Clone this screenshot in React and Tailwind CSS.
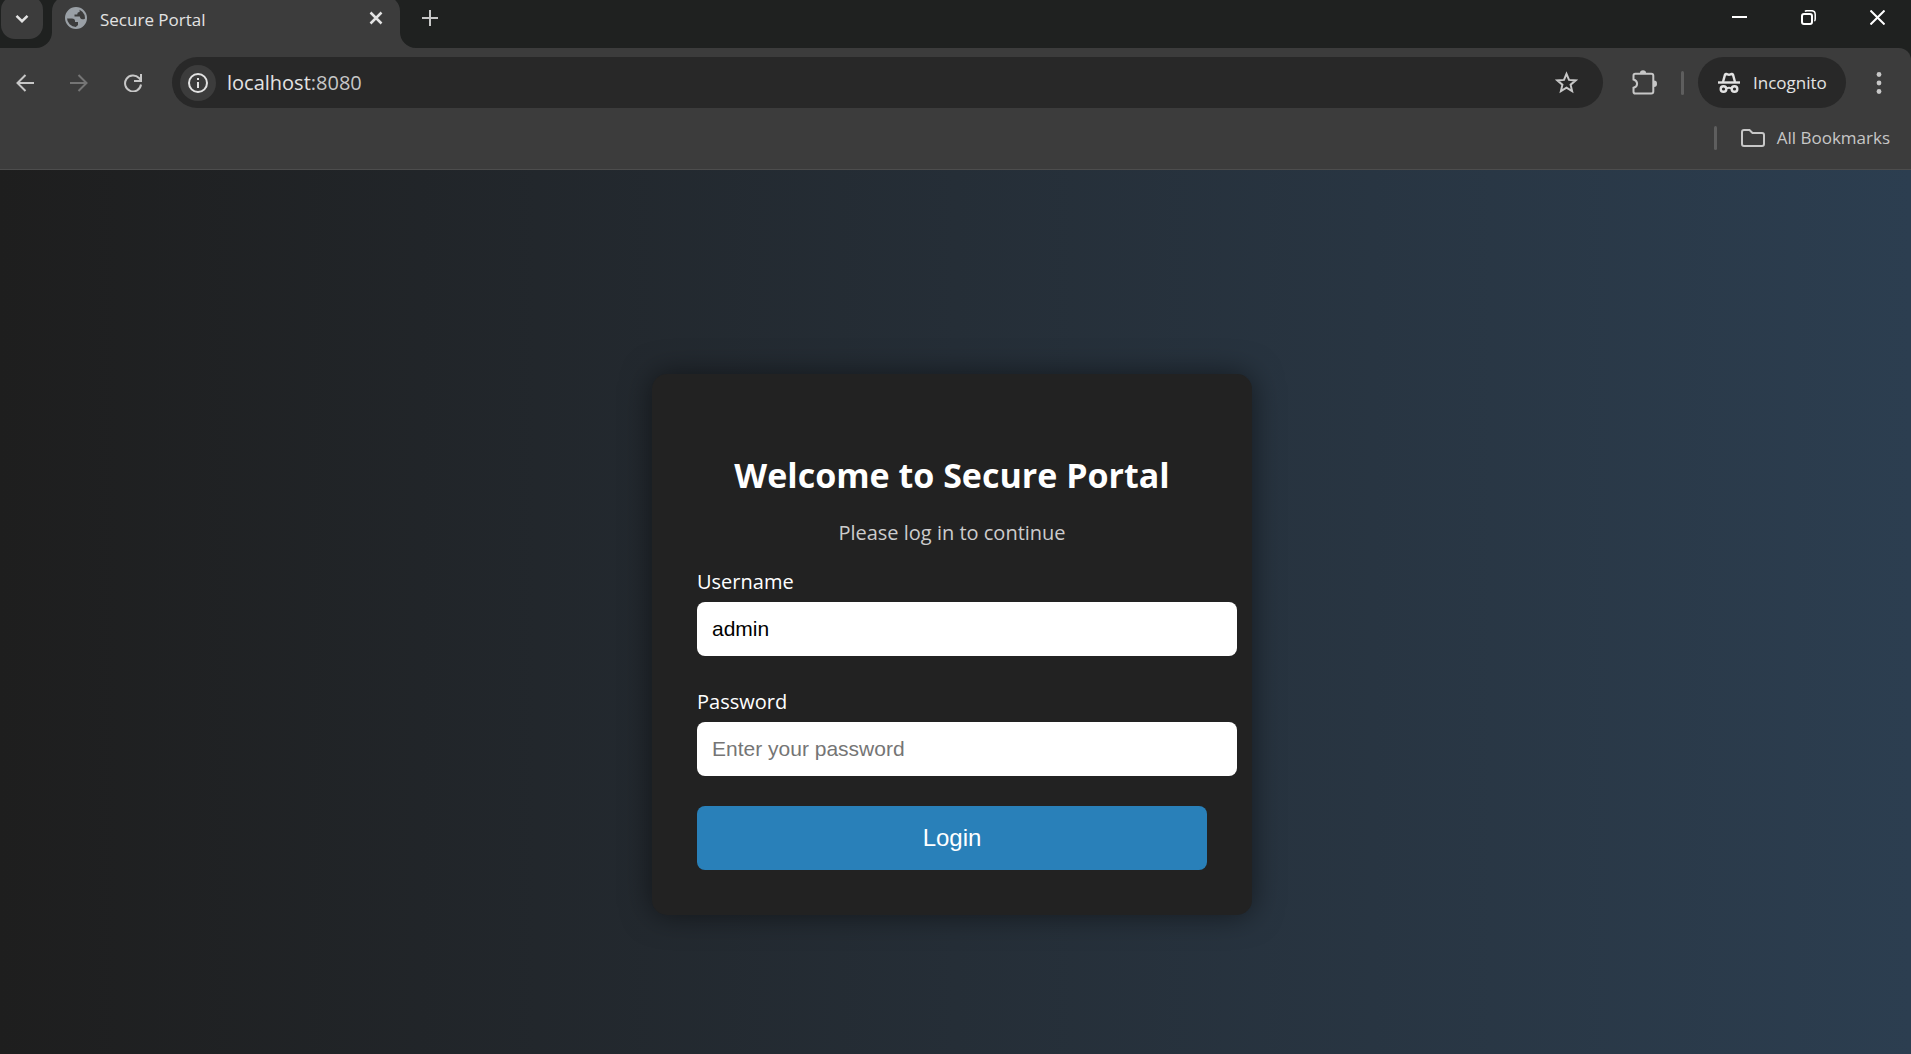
const UI = "font-['Open_Sans','Noto_Sans',sans-serif]";

function Icon({ className = '', children, box = '0 0 24 24', width = 2 }) {
  return (
    <svg viewBox={box} className={className} fill="none" stroke="currentColor" strokeWidth={width} aria-hidden="true">
      {children}
    </svg>
  );
}

function Flare({ className, d }) {
  return (
    <svg viewBox="0 0 16 16" className={`absolute bottom-0 size-4 ${className}`} fill="#3c3c3c" aria-hidden="true">
      <path d={d} />
    </svg>
  );
}

function TabStrip() {
  return (
    <div className="flex h-12 items-start overflow-hidden bg-[#1f2120]">
      <button type="button" aria-label="Search tabs" className="-mt-1 ml-px flex h-[43px] w-[42px] items-center justify-center rounded-[14px] bg-[#3c3c3c] text-[#e3e3e3]">
        <Icon className="size-3.5" box="0 0 14 14" width={2.5}>
          <path d="M1.500 4.800 7 10.200l5.500-5.400" />
        </Icon>
      </button>
      <div className="relative -mt-1 ml-[9px] flex h-[52px] w-[348px] items-center rounded-t-[15px] bg-[#3c3c3c] pl-[13px] pr-[17px] pb-2 text-[#e3e3e3]">
        <Flare className="right-full" d="M16 0v16H0A16 16 0 0 0 16 0z" />
        <Flare className="left-full" d="M0 0v16h16A16 16 0 0 1 0 0z" />
        <svg viewBox="0 0 22 22" className="size-[22px]" aria-hidden="true">
          <circle cx="11" cy="11" r="10" fill="#3c3c3c" stroke="#9aa0a6" strokeWidth="2" />
          <path fill="#9aa0a6" d="M12.500 1C6 1 1 5.500 1 11.500h6c2 0 3 1 3 2.500v1h3v3l-3 2.800c6 1 11-3.800 11-9.800-1 1-2.500 1.500-4 1.200-1.800-.4-2-1.900-2.200-2.700H9.500V7.500h2.800c0-1.700.8-2.500 2.300-2.500V2z" />
        </svg>
        <span className={`${UI} ml-[13px] flex-1 pt-1 text-[17px] leading-6`}>Secure Portal</span>
        <button type="button" aria-label="Close tab">
          <Icon className="size-3.5" box="0 0 14 14" width={2.5}>
            <path d="m1.500 1.500 11 11m0-11-11 11" />
          </Icon>
        </button>
      </div>
      <button type="button" aria-label="New tab" className="ml-[22px] flex h-9 items-center text-[#c7c7c7]">
        <Icon className="size-4" box="0 0 16 16">
          <path d="M8 0v16M0 8h16" />
        </Icon>
      </button>
      <div className="-mr-px ml-auto flex h-[35px] text-white">
        <button type="button" aria-label="Minimize" className="flex w-[69px] items-center justify-center">
          <Icon className="size-[15px]" box="0 0 15 15">
            <path d="M0 7h15" />
          </Icon>
        </button>
        <button type="button" aria-label="Restore" className="flex w-[69px] items-center justify-center">
          <Icon className="size-[15px]" box="0 0 15 15">
            <rect x="1" y="4" width="10" height="10" rx="2" />
            <path d="M4 1.500q.6-.8 2-.8h4.500q3.700 0 3.700 3.700V9q0 1.500-.8 2" strokeWidth="1.500" />
          </Icon>
        </button>
        <button type="button" aria-label="Close window" className="flex w-[69px] items-center justify-center">
          <Icon className="size-[15px]" box="0 0 15 15">
            <path d="m.5.5 14 14m0-14-14 14" />
          </Icon>
        </button>
      </div>
    </div>
  );
}

function Toolbar() {
  return (
    <div className="flex h-[69px] items-center pl-4 pr-[29px] text-[#c7c7c7]">
      <button type="button" aria-label="Back">
        <Icon className="size-[18px]" box="0 0 18 18">
          <path d="M18 9H1.500M9.500 1 1.500 9l8 8" />
        </Icon>
      </button>
      <button type="button" aria-label="Forward" className="ml-9 text-[#757575]">
        <Icon className="size-[18px]" box="0 0 18 18">
          <path d="M0 9h16.500M8.500 1l8 8-8 8" />
        </Icon>
      </button>
      <button type="button" aria-label="Reload" className="ml-9">
        <Icon className="size-[18px]" box="0 0 18 18">
          <path d="M17 10.500A8 8 0 1 1 15 4L17 6.500M17 0v7h-7" />
        </Icon>
      </button>
      <div className="ml-[30px] flex h-[51px] flex-1 items-center rounded-full bg-[#282828] pl-2 pr-[25px]">
        <button type="button" aria-label="View site information" className="flex size-9 items-center justify-center rounded-full bg-[#3c3c3c] text-[#e3e3e3]">
          <Icon className="size-5" box="0 0 20 20">
            <circle cx="10" cy="10" r="9" />
            <path d="M10 9v6M10 5v2" />
          </Icon>
        </button>
        <div className={`${UI} ml-[11px] flex-1 text-[20px] leading-7`}>
          <span className="text-[#e3e3e3]">localhost</span>:8080
        </div>
        <button type="button" aria-label="Bookmark this tab">
          <Icon className="size-[23px]" box="0 0 23 23">
            <path d="m11.500 2.800 2.500 6.100 6.600.5-5 4.300 1.500 6.400-5.600-3.400-5.600 3.400 1.500-6.400-5-4.300 6.600-.5z" />
          </Icon>
        </button>
      </div>
      <button type="button" aria-label="Extensions" className="ml-[29px]">
        <svg viewBox="0 0 25 25" className="size-[25px]" fill="currentColor" aria-hidden="true">
          <path d="M8 3a3 2.800 0 0 1 6 0z" />
          <path d="M22 10.500a3 3.200 0 0 1 0 6.400z" />
          <path d="M3.300 3.800h16q2 0 2 2v15.700q0 2-2 2h-16q-1.800 0-1.800-1.800v-3.900c4.800-1.500 4.800-6.800 0-8.300V5.600q0-1.800 1.800-1.800z" fill="none" stroke="currentColor" strokeWidth="2" />
        </svg>
      </button>
      <div className="ml-6 h-6 w-[3px] rounded-full bg-[#5e5e5e]" />
      <button type="button" className={`${UI} ml-3.5 flex h-[51px] w-[148px] items-center rounded-full bg-[#282828] pl-5 text-[17px] text-[#e3e3e3]`}>
        <svg viewBox="0 0 22 22" className="mr-[13px] size-[22px]" fill="none" stroke="currentColor" strokeWidth="2" aria-hidden="true">
          <path d="M0 10.500h22" strokeWidth="2.400" />
          <path d="M5 10l2-7.300q.3-1 1.300-.7l2.700.8 2.700-.8q1-.3 1.300.7l2 7.300" strokeWidth="2.400" />
          <circle cx="5.500" cy="17" r="2.800" strokeWidth="2.400" />
          <circle cx="16.500" cy="17" r="2.800" strokeWidth="2.400" />
          <path d="M8.500 16.500q2.500-1.500 5 0" />
        </svg>
        Incognito
      </button>
      <button type="button" aria-label="Menu" className="ml-[30px]">
        <svg viewBox="0 0 6 22" className="h-[22px] w-1.5" fill="currentColor" aria-hidden="true">
          <circle cx="3" cy="2.500" r="2.400" />
          <circle cx="3" cy="11" r="2.400" />
          <circle cx="3" cy="19.500" r="2.400" />
        </svg>
      </button>
    </div>
  );
}

function BookmarksBar() {
  return (
    <div className="flex h-[53px] items-start justify-end border-b border-[#4d4d4d] pr-[21px] pt-[9px] text-[#c7c7c7]">
      <div className="h-6 w-[3px] rounded-full bg-[#5e5e5e]" />
      <button type="button" className={`${UI} ml-6 flex items-center text-[17px] leading-6`}>
        <Icon className="mr-3 h-[18px] w-6" box="0 0 24 18">
          <path d="M3 1h5.500l3 3H21q2 0 2 2v9q0 2-2 2H3q-2 0-2-2V3q0-2 2-2z" />
        </Icon>
        All Bookmarks
      </button>
    </div>
  );
}

function Field({ id, label, ...props }) {
  return (
    <div className="mb-[30px]">
      <label htmlFor={id} className="mb-1 block text-[20px] leading-8 text-white">
        {label}
      </label>
      <input
        id={id}
        className="block h-[54px] w-[calc(100%+30px)] rounded-lg bg-white px-[15px] font-['Liberation_Sans',Arial,sans-serif] text-[21px] text-black outline-none placeholder:text-[#757575]"
        {...props}
      />
    </div>
  );
}

function LoginCard() {
  return (
    <form onSubmit={(e) => e.preventDefault()} className={`${UI} w-[600px] rounded-[15px] bg-[#222222] p-[45px] shadow-[0_0_30px_rgba(0,0,0,0.5)]`}>
      <h1 className="mt-8 text-center text-[34px] leading-12 font-bold whitespace-nowrap text-white">Welcome to Secure Portal</h1>
      <p className="mt-5 mb-[19px] text-center text-[20px] leading-7 text-[#cccccc]">Please log in to continue</p>
      <Field id="username" label="Username" type="text" defaultValue="admin" />
      <Field id="password" label="Password" type="password" placeholder="Enter your password" />
      <button type="submit" className="block h-16 w-full rounded-lg bg-[#2980b9] font-['Liberation_Sans',Arial,sans-serif] text-[24px] text-white">
        Login
      </button>
    </form>
  );
}

export default function App() {
  return (
    <div className="flex min-h-screen flex-col">
      <header className="bg-[#1f2120]">
        <TabStrip />
        <div className="rounded-tr-[12px] bg-[#3c3c3c]">
          <Toolbar />
          <BookmarksBar />
        </div>
      </header>
      <main className="flex flex-1 items-center justify-center bg-linear-to-r/srgb from-[#1e1e1e] to-[#2c3e50] pr-[7px] pt-16">
        <LoginCard />
      </main>
    </div>
  );
}
